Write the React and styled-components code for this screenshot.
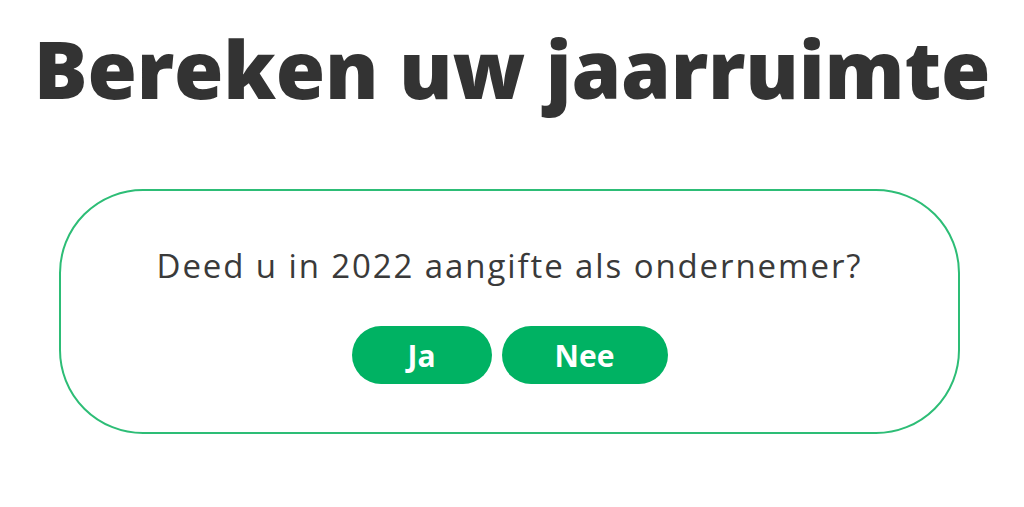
import React from "react";
import styled, { createGlobalStyle } from "styled-components";

const GlobalStyle = createGlobalStyle`
  html, body {
    margin: 0;
    padding: 0;
    background: #ffffff;
  }
  body {
    font-family: "Open Sans", "Liberation Sans", sans-serif;
    color: #333333;
  }
`;

const Page = styled.div`
  display: flex;
  flex-direction: column;
  padding: 0 64px 0 59px;
`;

const Title = styled.h1`
  margin: 16px -59px 0 -64px;
  padding-left: 10px;
  font-family: "Open Sans", sans-serif;
  font-weight: 800;
  font-size: 80px;
  line-height: 104px;
  letter-spacing: -0.2px;
  white-space: nowrap;
  text-align: center;
  color: #333333;
`;

const Card = styled.div`
  margin-top: 69px;
  height: 245px;
  box-sizing: border-box;
  border: 2px solid #2dbd76;
  border-radius: 84px;
  display: flex;
  flex-direction: column;
  align-items: center;
  padding-top: 53px;
`;

const Question = styled.p`
  margin: 0;
  font-family: "Open Sans", sans-serif;
  font-weight: 400;
  font-size: 33px;
  line-height: 44px;
  letter-spacing: 1.9px;
  color: #3a3a3a;
`;

const Answers = styled.div`
  display: flex;
  gap: 10px;
  margin-top: 38px;
`;

const Answer = styled.button`
  width: ${props => props.w}px;
  height: 58px;
  padding: 0;
  border: none;
  border-radius: 29px;
  background: #00b263;
  color: #ffffff;
  font-family: "Open Sans", sans-serif;
  font-weight: 700;
  font-size: 30px;
  cursor: pointer;
`;

export default function App() {
  return (
    <>
      <GlobalStyle />
      <Page>
        <Title>Bereken uw jaarruimte</Title>
        <Card>
          <Question>Deed u in 2022 aangifte als ondernemer?</Question>
          <Answers>
            <Answer w={140}>Ja</Answer>
            <Answer w={166}>Nee</Answer>
          </Answers>
        </Card>
      </Page>
    </>
  );
}
